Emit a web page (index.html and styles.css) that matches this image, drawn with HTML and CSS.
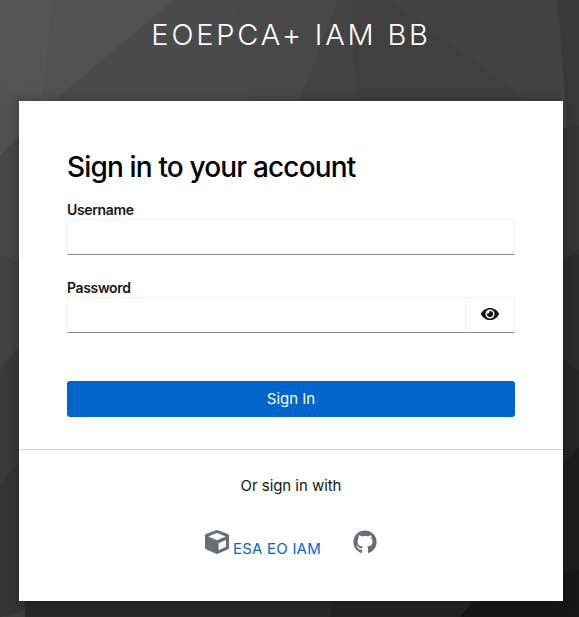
FILE: index.html
```html
<!DOCTYPE html>
<html lang="en">
<head>
<meta charset="utf-8">
<title>Sign in</title>
<link rel="stylesheet" href="styles.css">
</head>
<body>
<svg class="backdrop" viewBox="0 0 579 617" preserveAspectRatio="none" aria-hidden="true">
  <path fill="#4a4a4a" d="M0 0H400V140H0z"/>
  <path fill="#404040" d="M400 0H579V140H400z"/>
  <path fill="#3c3c3c" d="M0 140H30V617H0z"/>
  <path fill="#262626" d="M550 140H579V617H550z"/>
  <path fill="#555" d="M0 0H54L42 101L25 115L0 90z"/>
  <path fill="#525252" d="M54 0H174L54 101L19 137L0 156V86L42 101z"/>
  <path fill="#4b4b4b" d="M174 0H233L250 110H19L54 101z"/>
  <path fill="#494949" d="M233 0H338L299 110H250z"/>
  <path fill="#444" d="M338 0H351L357 101H299z"/>
  <path fill="#404040" d="M351 0H389L530 101H357z"/>
  <path fill="#434343" d="M389 0H558L567 128L530 101z"/>
  <path fill="#393939" d="M558 0H579V125L567 128z"/>
  <path fill="#484848" d="M0 156L25 130V265L0 255z"/>
  <path fill="#424242" d="M0 255L25 265V339L0 370z"/>
  <path fill="#3a3a3a" d="M0 370L25 339V452L0 486z"/>
  <path fill="#343434" d="M0 486L25 452V610L0 617z"/>
  <path fill="#333" d="M560 129L579 125V254L560 259z"/>
  <path fill="#2b2b2b" d="M560 259L579 254V372L560 356z"/>
  <path fill="#252525" d="M560 356L579 372V448L560 466z"/>
  <path fill="#1c1c1c" d="M560 466L579 448V571L560 574z"/>
  <path fill="#282828" d="M25 600H480L460 617H25z"/>
  <path fill="#232323" d="M333 600H478L462 617H330z"/>
  <path fill="#161616" d="M475 600L560 574L579 571V617H460z"/>
</svg>
<main class="page">
  <header class="brand">EOEPCA+ IAM BB</header>
  <section class="card">
    <form class="form">
      <h1 class="title">Sign in to your account</h1>
      <label class="label" for="user">Username</label>
      <input class="input" id="user" type="text">
      <label class="label second" for="pass">Password</label>
      <div class="group">
        <input class="input" id="pass" type="password">
        <button class="reveal" type="button" aria-label="Show password">
          <svg width="18" height="16" viewBox="0 0 576 512"><path fill="#151515" d="M572.52 241.4C518.29 135.59 410.93 64 288 64S57.68 135.64 3.48 241.41a32.35 32.35 0 0 0 0 29.19C57.71 376.41 165.07 448 288 448s230.32-71.64 284.52-177.41a32.35 32.35 0 0 0 0-29.19zM288 400a144 144 0 1 1 144-144 143.93 143.93 0 0 1-144 144zm0-240a95.31 95.31 0 0 0-25.31 3.79 47.85 47.85 0 0 1-66.9 66.9A95.78 95.78 0 1 0 288 160z"/></svg>
        </button>
      </div>
      <button class="submit" type="button"><span>Sign In</span></button>
    </form>
    <footer class="social">
      <p class="or"><span>Or sign in with</span></p>
      <div class="providers">
        <a class="provider">
          <svg width="24" height="24" viewBox="0 0 24 24"><path fill="#6a6e73" fill-rule="evenodd" d="M11.2.2Q12 0 12.8.2L23 4.1Q24 4.6 24 5.6V17.8Q24 18.8 23.1 19.2L12.8 23.8Q12 24.1 11.2 23.8L.9 19.2Q0 18.8 0 17.8V5.6Q0 4.6 1 4.1zM12 3L3.2 6.5L12 10.2L20.8 6.5zM13.6 13.3V20.2L21 16.8V10z"/></svg>
          <span class="name">ESA EO IAM</span>
        </a>
        <a class="provider" aria-label="GitHub">
          <svg width="24" height="24" viewBox="0 0 496 512"><path fill="#6a6e73" d="M244.8 8C106.1 8 0 113.3 0 252c0 110.9 69.8 205.8 169.5 239.2 12.8 2.3 17.3-5.6 17.3-12.1 0-6.2-.3-40.4-.3-61.4 0 0-70 15-84.7-29.8 0 0-11.4-29.1-27.8-36.6 0 0-22.9-15.7 1.6-15.4 0 0 24.9 2 38.6 25.8 21.9 38.6 58.6 27.5 72.9 20.9 2.3-16 8.8-27.1 16-33.7-55.9-6.2-112.3-14.3-112.3-110.5 0-27.5 7.6-41.3 23.6-58.9-2.6-6.5-11.1-33.3 2.6-67.9 20.9-6.5 69 27 69 27 20-5.6 41.5-8.5 62.8-8.5s42.8 2.9 62.8 8.5c0 0 48.1-33.6 69-27 13.7 34.7 5.2 61.4 2.6 67.9 16 17.7 25.8 31.5 25.8 58.9 0 96.5-58.9 104.2-114.8 110.5 9.2 7.9 17 22.9 17 46.4 0 33.7-.3 75.4-.3 83.6 0 6.5 4.6 14.4 17.3 12.1C428.2 457.8 496 362.9 496 252 496 113.3 383.5 8 244.8 8z"/></svg>
        </a>
      </div>
    </footer>
  </section>
</main>
</body>
</html>
```
FILE: styles.css
```css
* { box-sizing: border-box; }
body {
  margin: 0;
  height: 617px;
  overflow: hidden;
  background: #333;
  color: #151515;
  font-family: Inter, "Open Sans", sans-serif;
  font-size: 16px;
}
.backdrop { position: absolute; inset: 0; width: 100%; height: 617px; }
.page { position: relative; padding: 0 16px 0 19px; }
.brand {
  height: 101px;
  padding-top: 15px;
  text-align: center;
  color: #fff;
  font: 300 29px/40px Inter, sans-serif;
  letter-spacing: 2.8px;
  white-space: nowrap;
}
.card { height: 500px; background: #fff; box-shadow: 0 0 12px rgba(3, 3, 3, .28); }
.form { height: 349px; padding: 48px 48px 0; border-bottom: 1px solid #d2d2d2; }
.title {
  margin: 0 0 15px;
  color: #000;
  font-size: 28px;
  line-height: 37px;
  font-weight: 500;
  letter-spacing: -.84px;
  white-space: nowrap;
}
.label { display: block; height: 18px; font-size: 14px; line-height: 18px; font-weight: 600; letter-spacing: -.35px; }
.second { margin-top: 24px; }
.input {
  display: block;
  width: 100%;
  height: 36px;
  padding: 0 8px;
  border: 1px solid #f0f0f0;
  border-bottom-color: #8a8d90;
  border-radius: 0;
  background: #fff;
}
.group { display: flex; }
.reveal {
  flex: 0 0 49px;
  height: 36px;
  display: flex;
  align-items: center;
  justify-content: center;
  padding: 0 0 2px;
  border: solid #f0f0f0;
  border-width: 1px 1px 1px 0;
  border-bottom-color: #8a8d90;
  background: #fff;
}
.submit {
  display: block;
  width: 100%;
  height: 36px;
  margin-top: 48px;
  padding: 0;
  border: 0;
  border-radius: 3px;
  background: #06c;
  color: #fff;
  font: 400 15px/36px Inter, sans-serif;
}
.social { padding-top: 24px; }
.or { margin: 0; text-align: center; font-size: 15px; line-height: 24px; letter-spacing: -.05px; }
.providers { display: flex; justify-content: center; gap: 32px; margin-top: 32px; }
.provider { display: flex; gap: 4px; color: #06c; }
.name { padding-top: 7px; font-size: 15px; line-height: 24px; letter-spacing: .2px; white-space: nowrap; }
```
